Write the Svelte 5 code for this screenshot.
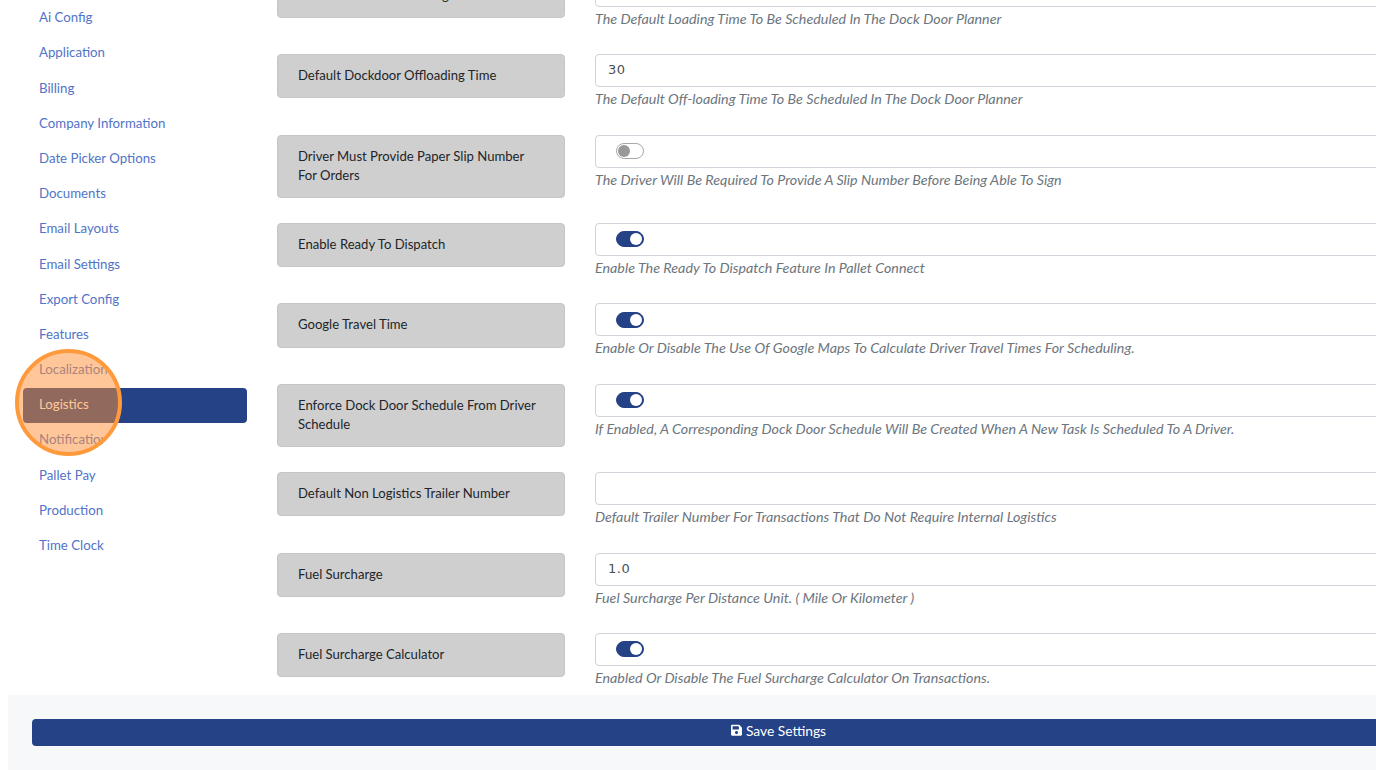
<script>
  const menu = [
    'Ai Config', 'Application', 'Billing', 'Company Information', 'Date Picker Options',
    'Documents', 'Email Layouts', 'Email Settings', 'Export Config', 'Features',
    'Localization', 'Logistics', 'Notifications', 'Pallet Pay', 'Production', 'Time Clock'
  ];
  const active = 'Logistics';
  // these two run under the edge of the highlight circle
  const cutLong = 'Localization';
  const cutShort = 'Notifications';

  const settings = [
    { label: 'Default Dockdoor Loading Time', value: '30', help: 'The Default Loading Time To Be Scheduled In The Dock Door Planner' },
    { label: 'Default Dockdoor Offloading Time', value: '30', help: 'The Default Off-loading Time To Be Scheduled In The Dock Door Planner' },
    { label: 'Driver Must Provide Paper Slip Number For Orders', toggle: false, help: 'The Driver Will Be Required To Provide A Slip Number Before Being Able To Sign' },
    { label: 'Enable Ready To Dispatch', toggle: true, help: 'Enable The Ready To Dispatch Feature In Pallet Connect' },
    { label: 'Google Travel Time', toggle: true, help: 'Enable Or Disable The Use Of Google Maps To Calculate Driver Travel Times For Scheduling.' },
    { label: 'Enforce Dock Door Schedule From Driver Schedule', toggle: true, help: 'If Enabled, A Corresponding Dock Door Schedule Will Be Created When A New Task Is Scheduled To A Driver.' },
    { label: 'Default Non Logistics Trailer Number', value: '', help: 'Default Trailer Number For Transactions That Do Not Require Internal Logistics' },
    { label: 'Fuel Surcharge', value: '1.0', help: 'Fuel Surcharge Per Distance Unit. ( Mile Or Kilometer )' },
    { label: 'Fuel Surcharge Calculator', toggle: true, help: 'Enabled Or Disable The Fuel Surcharge Calculator On Transactions.' }
  ];
</script>

<div class="page">
  <div class="layout">
    <nav class="sidebar">
      {#each menu as item}
        <a class="nav-item" class:active={item === active} href="#top">
          <span class:cut-long={item === cutLong} class:cut-short={item === cutShort}>{item}</span>
        </a>
      {/each}
    </nav>

    <main class="settings">
      {#each settings as s}
        <div class="row">
          <div class="label"><span>{s.label}</span></div>
          <div class="field">
            {#if s.toggle !== undefined}
              <div class="control">
                <span class="switch" class:on={s.toggle}></span>
              </div>
            {:else}
              <input class="control" type="text" value={s.value} />
            {/if}
            <p class="help">{s.help}</p>
          </div>
        </div>
      {/each}
    </main>
  </div>

  <div class="save-bar">
    <button class="save">
      <svg viewBox="0 0 448 512" width="11" height="12.5" aria-hidden="true">
        <path fill="currentColor" d="M433.941 129.941l-83.882-83.882A48 48 0 0 0 316.118 32H48C21.49 32 0 53.49 0 80v352c0 26.51 21.49 48 48 48h352c26.51 0 48-21.49 48-48V163.882a48 48 0 0 0-14.059-33.941zM224 416c-35.346 0-64-28.654-64-64 0-35.346 28.654-64 64-64s64 28.654 64 64c0 35.346-28.654 64-64 64zm96-304.52V212c0 6.627-5.373 12-12 12H76c-6.627 0-12-5.373-12-12V108c0-6.627 5.373-12 12-12h228.52c3.183 0 6.235 1.264 8.485 3.515l3.48 3.48A11.996 11.996 0 0 1 320 111.48z"/>
      </svg>
      Save Settings
    </button>
  </div>

  <div class="spot"></div>
</div>

<style>
  :global(body) {
    margin: 0;
    background: #fff;
  }

  .page {
    position: relative;
    width: 1376px;
    height: 770px;
    overflow: hidden;
    font-family: "Lato", "Open Sans", sans-serif;
    font-size: 13.1px;
    color: #212529;
  }

  .layout {
    display: flex;
    width: 1600px;
  }

  .sidebar {
    display: flex;
    flex-direction: column;
    width: 224px;
    margin: 1.2px 0 0 23px;
    flex-shrink: 0;
  }

  .nav-item {
    height: 35.2px;
    line-height: 33px;
    padding-left: 16px;
    border-radius: 4px;
    color: #5174c8;
    font-size: 13.25px;
    text-decoration: none;
  }

  .nav-item.active {
    background: #254287;
    color: #fff;
  }

  .cut-long,
  .cut-short {
    display: inline-block;
    overflow: hidden;
    white-space: nowrap;
    vertical-align: top;
  }

  .cut-long {
    width: 68px;
  }

  .cut-short {
    width: 64px;
  }

  .settings {
    margin: -26.5px 0 0 30px;
    flex: 1;
  }

  .row {
    display: flex;
    align-items: flex-start;
    gap: 30px;
    margin-bottom: 25px;
  }

  .label {
    box-sizing: border-box;
    flex: 0 0 288px;
    padding: 11px 20px 12.25px;
    background: #cfcfcf;
    border: 1px solid #c6c6c6;
    border-radius: 4px;
    line-height: 19px;
    color: #212529;
  }

  .field {
    flex: 1;
  }

  .control {
    display: block;
    box-sizing: border-box;
    width: 100%;
    height: 33px;
    padding: 0 12px 2px;
    background: #fff;
    border: 1px solid #ced4da;
    border-radius: 4px;
    font-family: "DejaVu Sans", sans-serif;
    font-size: 13px;
    letter-spacing: 0.5px;
    color: #495057;
    outline: none;
  }

  .help {
    margin: 0;
    height: 22.5px;
    line-height: 24px;
    font-size: 14.3px;
    font-style: italic;
    color: #6c757d;
  }

  .switch {
    display: block;
    position: relative;
    box-sizing: border-box;
    width: 28px;
    height: 16px;
    margin: 7.3px 0 0 8px;
    border: 1px solid #a8a8a8;
    border-radius: 8px;
    background: #fff;
  }

  .switch::after {
    content: "";
    position: absolute;
    left: 1px;
    top: 1px;
    width: 12px;
    height: 12px;
    border-radius: 50%;
    background: #999;
  }

  .switch.on {
    background: #254287;
    border-color: #254287;
  }

  .switch.on::after {
    left: 13px;
    background: #fff;
  }

  .save-bar {
    position: absolute;
    left: 8px;
    top: 695px;
    width: 1600px;
    height: 75px;
    padding: 24px;
    box-sizing: border-box;
    background: #f6f8fa;
  }

  .save {
    display: flex;
    align-items: center;
    justify-content: center;
    gap: 4px;
    width: 1492px;
    height: 27px;
    padding: 0 0 4px 1px;
    border: none;
    border-radius: 4px;
    background: #254287;
    color: #fff;
    font: inherit;
    font-size: 13.8px;
  }

  .spot {
    position: absolute;
    left: 15px;
    top: 349px;
    width: 107px;
    height: 107px;
    box-sizing: border-box;
    border: 4px solid #ff9a3c;
    border-radius: 50%;
    background: rgba(255, 143, 51, 0.5);
  }
</style>
